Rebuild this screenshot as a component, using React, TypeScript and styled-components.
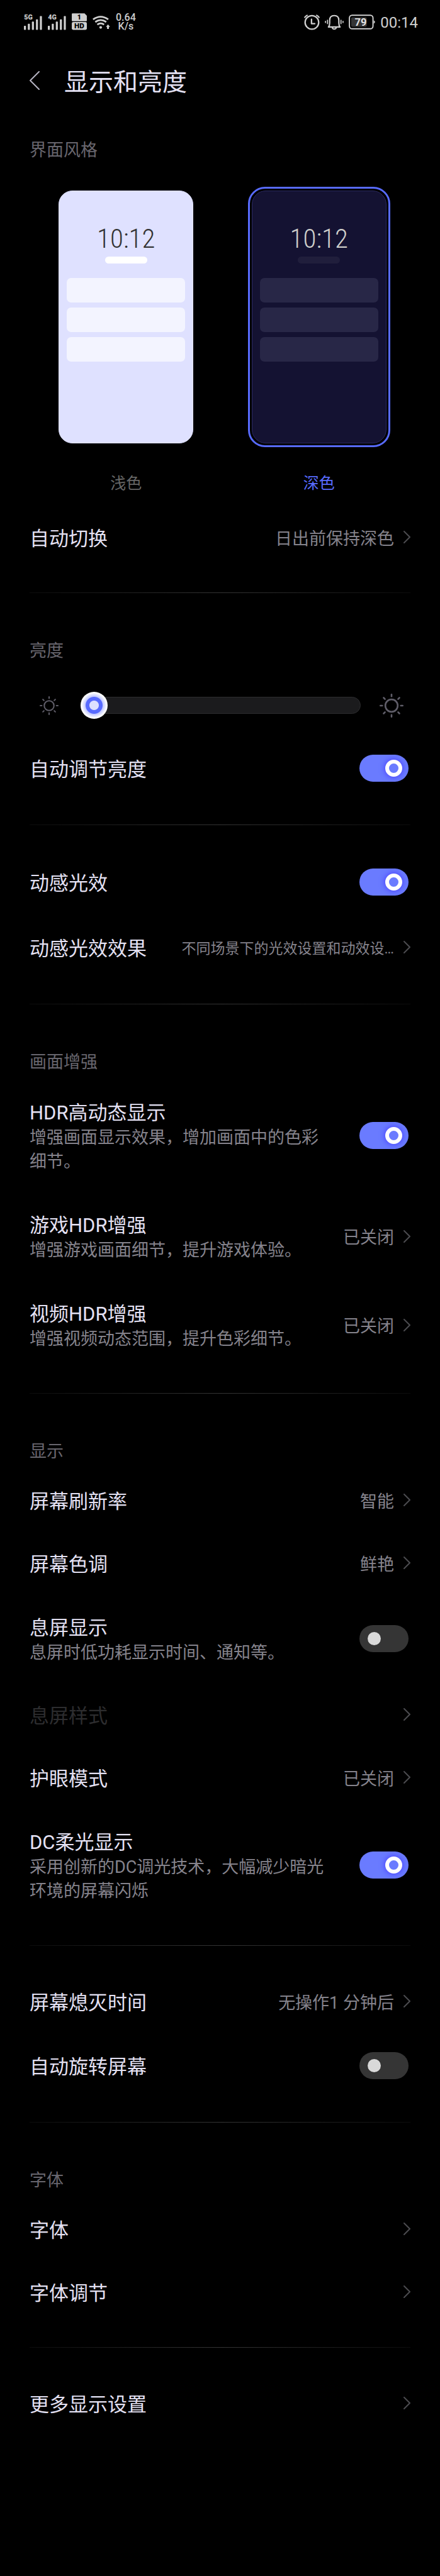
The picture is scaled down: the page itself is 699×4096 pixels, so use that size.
import React, { useId, useState } from "react";
import styled, { createGlobalStyle, css } from "styled-components";

const GlobalStyle = createGlobalStyle`
  *, *::before { box-sizing: border-box; }
  body {
    margin: 0;
    background: #000;
    color: #e4e1f3;
    font-family: Roboto, "Noto Sans CJK SC", sans-serif;
    font-size: 31px;
    line-height: 40px;
  }
  button {
    margin: 0;
    border: 0;
    padding: 0;
    background: none;
    color: inherit;
    font: inherit;
    text-align: left;
  }
`;

const Page = styled.main`
  min-height: 100vh;
  background: #000;
`;

/* ---------- status bar ---------- */

const StatusBar = styled.div`
  display: flex;
  align-items: center;
  justify-content: space-between;
  height: 70px;
  padding: 0 35px 0 38px;
  color: #cfcfcf;
`;

const StatusGroup = styled.div<{ $gap: number }>`
  display: flex;
  align-items: center;
  gap: ${(p) => p.$gap}px;
`;

const StatusIcon = styled.svg`
  display: block;
  height: 28px;
  flex: none;
`;

const Speed = styled.div`
  font-size: 16px;
  font-weight: 500;
  line-height: 14px;
  text-align: center;
`;

const Clock = styled.time`
  padding-top: 1px;
  font-size: 24px;
  line-height: 28px;
`;

function Signal({ label }: { label: string }) {
  return (
    <StatusIcon width="29" viewBox="55 37 135 130" fill="#cfcfcf">
      <text x="56" y="85" fontSize="50" fontWeight="900">{label}</text>
      <rect x="55" y="130" width="15" height="30" rx="4" />
      <rect x="84" y="115" width="15" height="45" rx="4" />
      <rect x="114" y="99" width="15" height="61" rx="4" />
      <rect x="144" y="82" width="15" height="78" rx="4" />
      <rect x="173" y="58" width="15" height="102" rx="4" />
    </StatusIcon>
  );
}

function SimBadge() {
  return (
    <StatusIcon width="24" viewBox="399 37 111 130">
      <path d="M405 38h88l17 17v35q0 6-6 6h-99q-6 0-6-6V44q0-6 6-6z" fill="#cfcfcf" />
      <rect x="399" y="102" width="111" height="58" rx="10" fill="#cfcfcf" />
      <text x="454" y="85" fontSize="50" fontWeight="900" textAnchor="middle" fill="#000">1</text>
      <text x="454" y="150" fontSize="54" fontWeight="900" textAnchor="middle" fill="#000">HD</text>
    </StatusIcon>
  );
}

function Wifi() {
  return (
    <StatusIcon width="28" viewBox="555 37 130 130" fill="none" stroke="#cfcfcf" strokeWidth="13">
      <path d="M559 83q56-40 112 0" />
      <path d="M575 102q40-29 81 0" />
      <path d="M590 121q25-18 50 0" />
      <circle cx="615" cy="142" r="10" fill="#cfcfcf" stroke="none" />
      <path d="M669 119l15 19h-8v15h-14v-15h-8z" fill="#cfcfcf" stroke="none" />
    </StatusIcon>
  );
}

function Alarm() {
  return (
    <StatusIcon width="25" viewBox="28 37 118 130" fill="none" stroke="#cfcfcf" strokeLinecap="round">
      <circle cx="87" cy="105" r="51" strokeWidth="11" />
      <path d="M84 82v32h24" strokeWidth="11" strokeLinejoin="round" />
      <path d="M34 67q6-11 17-15M140 67q-6-11-17-15" strokeWidth="10" />
    </StatusIcon>
  );
}

function Bell() {
  return (
    <StatusIcon width="30" viewBox="185 37 140 130" fill="none" stroke="#cfcfcf" strokeWidth="10" strokeLinejoin="round" strokeLinecap="round">
      <path d="M212 139q9-11 9-30V89q0-35 34-35t34 35v20q0 19 9 30z" />
      <path d="M241 145q3 9 14 9t14-9" />
      <path d="M205 89v25M305 89v25M190 97v9M320 97v9" strokeWidth="8" />
    </StatusIcon>
  );
}

function Battery() {
  return (
    <StatusIcon width="42" viewBox="374 37 195 130">
      <rect x="379" y="52" width="174" height="100" rx="20" fill="none" stroke="#cfcfcf" strokeWidth="9" />
      <path d="M558 88l9 10v8l-9 10z" fill="#cfcfcf" />
      <rect x="392" y="67" width="115" height="70" rx="10" fill="#353535" />
      <text x="462" y="131" fontSize="77" fontWeight="700" textAnchor="middle" fill="#e2e2e2">79</text>
    </StatusIcon>
  );
}

/* ---------- header and sections ---------- */

const Header = styled.header`
  display: flex;
  align-items: center;
  gap: 39px;
  height: 115px;
  padding: 0 47px;
`;

const BackButton = styled.button`
  display: flex;
`;

const PageTitle = styled.h1`
  margin: 0;
  padding-top: 7px;
  font-size: 39px;
  font-weight: 400;
  line-height: 48px;
`;

const SectionTitle = styled.h2`
  margin: 0;
  padding: 34px 47px 7px;
  color: #68666e;
  font-size: 27px;
  font-weight: 400;
  line-height: 40px;
`;

const Divider = styled.hr`
  height: 1px;
  margin: 38px 47px;
  border: 0;
  background: linear-gradient(90deg, #0c0c0c, #343434 50%, #0c0c0c);
`;

/* ---------- theme previews ---------- */

const ThemePicker = styled.div`
  display: grid;
  grid-template-columns: 1fr 1fr;
  padding: 31px 39px 16px 47px;
`;

const ThemeOption = styled.label`
  display: flex;
  flex-direction: column;
  align-items: center;
  gap: 37px;
`;

const HiddenRadio = styled.input`
  position: absolute;
  opacity: 0;
  pointer-events: none;
`;

const PreviewFrame = styled.span<{ $selected: boolean }>`
  display: block;
  padding: 3px;
  border: 3px solid ${(p) => (p.$selected ? "#586bff" : "transparent")};
  border-radius: 27px;
`;

const Preview = styled.span<{ $dark: boolean }>`
  display: flex;
  flex-direction: column;
  align-items: center;
  width: 214px;
  height: 402px;
  padding: 51px 12px 0;
  border: 1px solid ${(p) => (p.$dark ? "#2b2a62" : "#dfe1ff")};
  border-radius: 22px;
  background: ${(p) => (p.$dark ? "#141232" : "#dfe1ff")};
  color: ${(p) => (p.$dark ? "#cfcfcb" : "#333")};
`;

const PreviewClock = styled.span`
  font-family: "Roboto Condensed", Roboto, sans-serif;
  font-size: 43px;
  font-weight: 300;
  line-height: 48px;
`;

const PreviewPill = styled.span<{ $dark: boolean }>`
  width: 67px;
  height: 11px;
  margin: 5px 0 23px;
  border-radius: 6px;
  background: ${(p) => (p.$dark ? "#201e3c" : "#fff")};
`;

const PreviewCard = styled.span<{ $dark: boolean }>`
  width: 100%;
  height: 39px;
  margin-bottom: 8px;
  border-radius: 7px;
  background: ${(p) => (p.$dark ? "#282747" : "#f3f4ff")};
`;

const ThemeName = styled.span<{ $selected: boolean }>`
  padding-top: 2px;
  color: ${(p) => (p.$selected ? "#586bff" : "#666")};
  font-size: 25px;
  line-height: 38px;
`;

/* ---------- rows ---------- */

const rowStyle = css<{ $noted: boolean }>`
  display: flex;
  align-items: center;
  justify-content: space-between;
  width: 100%;
  padding: ${(p) => (p.$noted ? 29 : 27)}px 47px;
`;

const LinkRow = styled.button<{ $noted: boolean; $tall?: boolean }>`
  ${rowStyle}
  min-height: ${(p) => (p.$tall ? 104 : 100)}px;
  &:disabled { color: #2d2d2f; }
`;

const SwitchRow = styled.label<{ $noted: boolean }>`
  ${rowStyle}
  min-height: 104px;
  padding-right: 50px;
`;

const RowText = styled.span`
  flex: 1;
  min-width: 0;
  padding-top: 5px;
`;

const RowTitle = styled.span`
  display: block;
`;

const RowNote = styled.span`
  display: block;
  max-width: 479px;
  color: #85838c;
  font-size: 27px;
  line-height: 38px;
`;

const RowValue = styled.span<{ $small?: boolean }>`
  padding-top: 5px;
  margin-right: 14px;
  color: #85838c;
  font-size: ${(p) => (p.$small ? 23 : 27)}px;
  white-space: nowrap;
`;

const Switch = styled.input`
  appearance: none;
  display: flex;
  flex: none;
  align-items: center;
  width: 78px;
  height: 43px;
  margin: 0 0 0 45px;
  padding: 0 13px;
  border-radius: 22px;
  background: #353535;

  &::before {
    content: "";
    width: 21px;
    height: 21px;
    border-radius: 50%;
    background: #d9d9d9;
  }

  &:checked {
    justify-content: flex-end;
    padding: 0 10px;
    background: #6a7bff;
  }

  &:checked::before {
    width: 27px;
    height: 27px;
    border: 6px solid #fff;
    background: #6a7bff;
    box-shadow: 0 0 8px 1px #4a43ff;
  }
`;

const ChevronIcon = styled.svg`
  display: block;
  flex: none;
`;

function Chevron() {
  return (
    <ChevronIcon width="12" height="20" viewBox="0 0 12 20" fill="none" stroke="#4b4b4f" strokeWidth="2" strokeLinecap="round">
      <path d="M2 1l9 9-9 9" />
    </ChevronIcon>
  );
}

type NavItemProps = {
  title: string;
  note?: string;
  value?: string;
  smallValue?: boolean;
  disabled?: boolean;
};

function NavItem({ title, note, value, smallValue, disabled }: NavItemProps) {
  return (
    <LinkRow type="button" disabled={disabled} $noted={Boolean(note)} $tall={smallValue}>
      <RowText>
        <RowTitle>{title}</RowTitle>
        {note && <RowNote>{note}</RowNote>}
      </RowText>
      {value && <RowValue $small={smallValue}>{value}</RowValue>}
      <Chevron />
    </LinkRow>
  );
}

type SwitchItemProps = { title: string; note?: string; initial?: boolean };

function SwitchItem({ title, note, initial = false }: SwitchItemProps) {
  const id = useId();
  const [on, setOn] = useState(initial);
  return (
    <SwitchRow htmlFor={id} $noted={Boolean(note)}>
      <RowText>
        <RowTitle>{title}</RowTitle>
        {note && <RowNote>{note}</RowNote>}
      </RowText>
      <Switch id={id} type="checkbox" role="switch" checked={on} onChange={(e) => setOn(e.target.checked)} />
    </SwitchRow>
  );
}

/* ---------- brightness ---------- */

const BrightnessRow = styled.div`
  display: flex;
  align-items: center;
  height: 95px;
  margin-top: 12px;
  padding: 0 58px 0 63px;
`;

const SunIcon = styled.svg`
  flex: none;
`;

const BrightnessSlider = styled.input`
  appearance: none;
  flex: 1;
  min-width: 0;
  height: 43px;
  margin: 0 30px 0 35px;
  background: none;

  &::-webkit-slider-runnable-track {
    height: 27px;
    border: 1px solid #2c2c2e;
    border-radius: 14px;
    background: #1b1b1d;
  }

  &::-webkit-slider-thumb {
    appearance: none;
    width: 43px;
    height: 43px;
    margin: -9px 0 0 -1px;
    border-radius: 50%;
    background: radial-gradient(circle, #dde1ff 0 7px, #586bff 8px 13px, #c3c9ff 14px, #fff 20px);
  }
`;

function Sun({ size, stroke }: { size: number; stroke: number }) {
  return (
    <SunIcon width={size} height={size} viewBox="-29 -29 58 58" fill="none" stroke="#5f5d68" strokeWidth={stroke}>
      <circle r="15" />
      {[0, 45, 90, 135, 180, 225, 270, 315].map((angle) => (
        <path key={angle} d="M0-22.500V-27" transform={`rotate(${angle})`} strokeLinecap="round" />
      ))}
    </SunIcon>
  );
}

const themes = [
  { key: "light", name: "浅色" },
  { key: "dark", name: "深色" },
];

export default function App() {
  const [theme, setTheme] = useState("dark");
  const [brightness, setBrightness] = useState(0);

  return (
    <Page lang="zh-CN">
      <GlobalStyle />
      <StatusBar>
        <StatusGroup $gap={9}>
          <Signal label="5G" />
          <Signal label="4G" />
          <SimBadge />
          <Wifi />
          <Speed>0.64<br />K/s</Speed>
        </StatusGroup>
        <StatusGroup $gap={8}>
          <Alarm />
          <Bell />
          <Battery />
          <Clock>00:14</Clock>
        </StatusGroup>
      </StatusBar>

      <Header>
        <BackButton type="button" aria-label="返回">
          <svg width="16" height="30" viewBox="0 0 16 30" fill="none" stroke="#b5b3c1" strokeWidth="2" strokeLinecap="round" strokeLinejoin="round">
            <path d="M15 1L1 15l14 14" />
          </svg>
        </BackButton>
        <PageTitle>显示和亮度</PageTitle>
      </Header>

      <SectionTitle>界面风格</SectionTitle>
      <ThemePicker role="radiogroup" aria-label="界面风格">
        {themes.map(({ key, name }) => {
          const dark = key === "dark";
          const selected = theme === key;
          return (
            <ThemeOption key={key}>
              <HiddenRadio type="radio" name="theme" checked={selected} onChange={() => setTheme(key)} />
              <PreviewFrame $selected={selected}>
                <Preview $dark={dark}>
                  <PreviewClock>10:12</PreviewClock>
                  <PreviewPill $dark={dark} />
                  <PreviewCard $dark={dark} />
                  <PreviewCard $dark={dark} />
                  <PreviewCard $dark={dark} />
                </Preview>
              </PreviewFrame>
              <ThemeName $selected={selected}>{name}</ThemeName>
            </ThemeOption>
          );
        })}
      </ThemePicker>
      <NavItem title="自动切换" value="日出前保持深色" />
      <Divider />

      <SectionTitle>亮度</SectionTitle>
      <BrightnessRow>
        <Sun size={30} stroke={4} />
        <BrightnessSlider
          type="range"
          min={0}
          max={100}
          value={brightness}
          aria-label="亮度"
          onChange={(e) => setBrightness(Number(e.target.value))}
        />
        <Sun size={38} stroke={4} />
      </BrightnessRow>
      <SwitchItem title="自动调节亮度" initial />
      <Divider />

      <SwitchItem title="动感光效" initial />
      <NavItem title="动感光效效果" value="不同场景下的光效设置和动效设…" smallValue />
      <Divider />

      <SectionTitle>画面增强</SectionTitle>
      <SwitchItem title="HDR高动态显示" note="增强画面显示效果，增加画面中的色彩细节。" initial />
      <NavItem title="游戏HDR增强" note="增强游戏画面细节，提升游戏体验。" value="已关闭" />
      <NavItem title="视频HDR增强" note="增强视频动态范围，提升色彩细节。" value="已关闭" />
      <Divider />

      <SectionTitle>显示</SectionTitle>
      <NavItem title="屏幕刷新率" value="智能" />
      <NavItem title="屏幕色调" value="鲜艳" />
      <SwitchItem title="息屏显示" note="息屏时低功耗显示时间、通知等。" />
      <NavItem title="息屏样式" disabled />
      <NavItem title="护眼模式" value="已关闭" />
      <SwitchItem title="DC柔光显示" note="采用创新的DC调光技术，大幅减少暗光环境的屏幕闪烁" initial />
      <Divider />

      <NavItem title="屏幕熄灭时间" value="无操作1 分钟后" />
      <SwitchItem title="自动旋转屏幕" />
      <Divider />

      <SectionTitle>字体</SectionTitle>
      <NavItem title="字体" />
      <NavItem title="字体调节" />
      <Divider />

      <NavItem title="更多显示设置" />
    </Page>
  );
}
